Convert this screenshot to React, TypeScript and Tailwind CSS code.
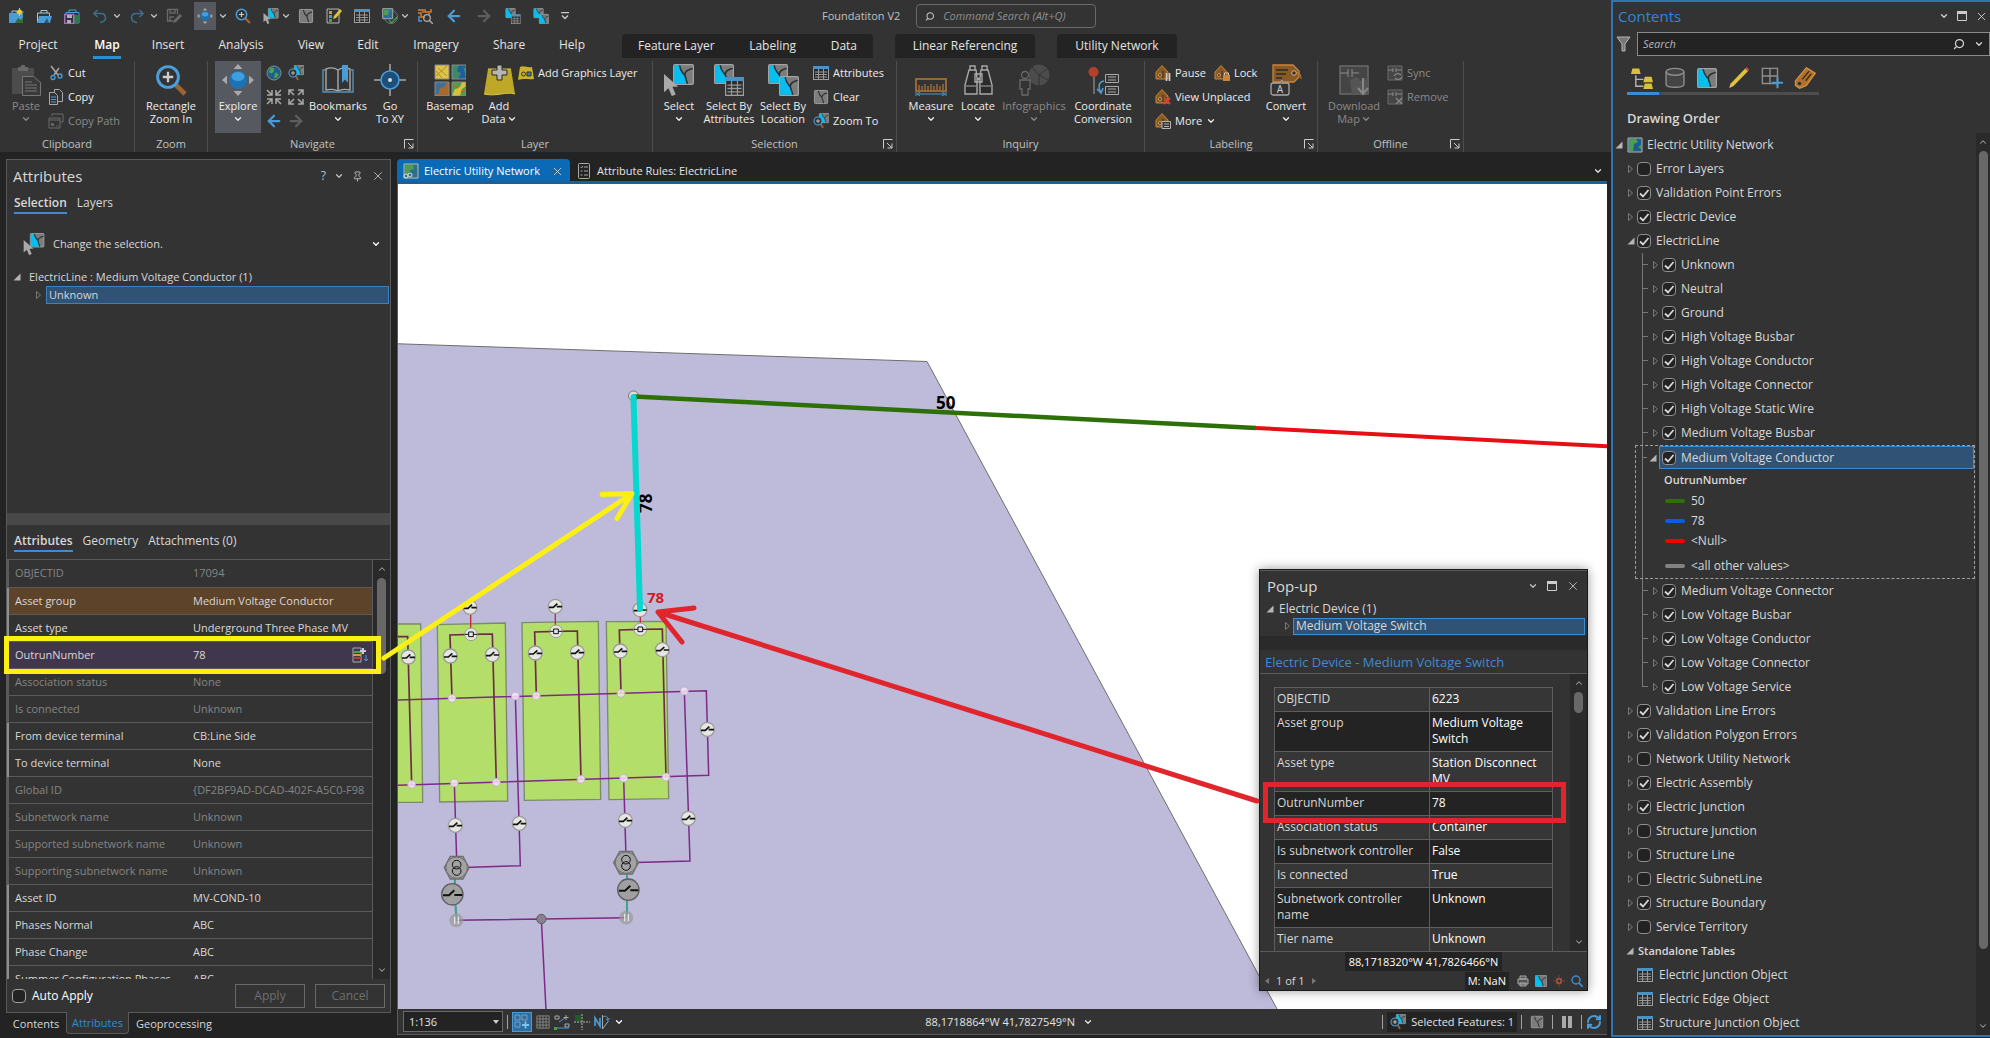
import React from 'react';
import { ArrowLeft, ArrowRight, ChevronDown, ChevronUp, Pin, RefreshCw, Search, X } from 'lucide-react';
import clsx from 'clsx';

/* ---------- icons ---------- */

type IconProps = { size?: number; className?: string };

function Svg({ size = 16, box = 16, className, children }: IconProps & { box?: number; children: React.ReactNode }) {
  return (
    <svg width={size} height={size} viewBox={`0 0 ${box} ${box}`} fill="none" className={clsx('shrink-0', className)} aria-hidden="true">
      {children}
    </svg>
  );
}

function Tile({ x = 0, y = 0, s = 16, off = false }: { x?: number; y?: number; s?: number; off?: boolean }) {
  return (
    <g transform={`translate(${x} ${y}) scale(${s / 16})`}>
      <rect x="0.5" y="0.5" width="15" height="15" rx="1" fill="#7c7c7c" stroke="#a3a3a3" />
      {!off && <path d="M1 1h4.500c0 3 1 5 3.500 7l2 7H1z" fill="#06bff0" />}
      <path d="M5 1c.5 4 2 5.500 4 7.500l2 6.500M9 8.500c0-3 2-4 6-5" stroke="#2b2b2b" strokeWidth="1.200" />
    </g>
  );
}

function Lens({ x = 8, y = 7, r = 5, hx = 15, hy = 15, plus = true }) {
  const d = r * 0.7;
  return (
    <g>
      <path d={`M${x + d} ${y + d}L${hx} ${hy}`} stroke="#9a6433" strokeWidth={r * 0.45} />
      <circle cx={x} cy={y} r={r} fill="#333" stroke="#4a9fdb" strokeWidth={r * 0.28} />
      {plus && <path d={`M${x - r / 2} ${y}h${r}M${x} ${y - r / 2}v${r}`} stroke="#ccc" strokeWidth={r * 0.22} />}
    </g>
  );
}

const Cursor = ({ x = 0, y = 0, s = 1 }) => (
  <path transform={`translate(${x} ${y}) scale(${s})`} d="M0 0v14l3.500-3 2.500 6 3-1.200-2.500-6H11z" fill="#a9a9a9" />
);

const TableGlyph = ({ x = 0, y = 0, w = 16, h = 14, dim = false }) => (
  <g transform={`translate(${x} ${y}) scale(${w / 16} ${h / 14})`}>
    <rect x="0.5" y="0.5" width="15" height="13" fill="#2b2b2b" stroke={dim ? '#777' : '#a0a0a0'} />
    <rect x="0" y="0" width="16" height="3" fill={dim ? '#777' : '#4a93c9'} />
    <path d="M2 6h12M2 8.500h12M2 11h12M5.500 3v11M10.500 3v11" stroke="#999" strokeWidth="1" />
  </g>
);

const TagGlyph = ({ x = 0, y = 0, s = 1 }) => (
  <g transform={`translate(${x} ${y}) scale(${s})`}>
    <path d="M1 14V7l6-6.500 6 6.500v7z" fill="#8a5a25" stroke="#c8853a" />
    <circle cx="5" cy="10" r="1.500" fill="#2b2b2b" stroke="#ddb37d" strokeWidth="0.800" />
    <path d="M8 6v7M11 8v5" stroke="#3a2a18" />
  </g>
);

const NewProject = () => (
  <Svg>
    <path d="M1 5h14v10H1z" fill="#4a9bd6" /><path d="M7 15l3-5 3 2 2-3v6z" fill="#2f6f35" />
    <path d="M4 5V3h5" stroke="#9fc8e6" /><circle cx="11.500" cy="4" r="2.500" fill="#e8cf3a" /><path d="M11.500 0v8M7.500 4h8" stroke="#e8cf3a" />
  </Svg>
);
const OpenProject = () => (
  <Svg><path d="M5 5V2.500h6V5M1.500 14V5h12v3" stroke="#9fc8e6" /><path d="M3 8h13l-2 7H1z" fill="#4a9bd6" /><path d="M8 15l3-5 2 5z" fill="#235a86" /></Svg>
);
const SaveProject = () => (
  <Svg><path d="M5 4V2h7v2M2 12V4.500h13V15h-5" stroke="#4a9bd6" /><path d="M10 7h5v8h-5z" fill="#2f7a4a" /><path d="M.7 6.500h9v9h-9z" fill="#333" stroke="#9a76b8" strokeWidth="1.400" /><path d="M3 7h5v3H3zM3 12h4v3H3z" fill="#b8a5c8" /></Svg>
);
const Undo = ({ flip = false }) => (
  <Svg><path transform={flip ? 'translate(16 0) scale(-1 1)' : undefined} d="M5.500 2L2 5.500 5.500 9M2.500 5.500H9c3 0 4.500 2 4.500 4.500S11 14.500 8 14.500" stroke="#3d6d8c" strokeWidth="1.600" /></Svg>
);
const SaveEdits = () => (
  <Svg><path d="M1.500 1.500h10v5M1.500 1.500V13H7M4 1.500V5h5V1.500M4 13V9h4" stroke="#6a6a6a" strokeWidth="1.300" /><path d="M7 15l1-3 6-6 2 2-6 6z" fill="#6a6a6a" /></Svg>
);
const ExploreIcon = ({ size = 32 }: IconProps) => (
  <Svg size={size} box={32}>
    <path d="M16 0l4.500 5h-9zM16 32l4.500-5h-9zM0 16l5-4.500v9zM32 16l-5-4.500v9z" fill="#a9a9a9" />
    <circle cx="16" cy="16" r="9" fill="#1b72b4" /><ellipse cx="16" cy="12.500" rx="6.500" ry="4.500" fill="#3f9ede" />
  </Svg>
);
const ZoomIcon = ({ size = 16 }: IconProps) => <Svg size={size}><Lens x={6.500} y={6.500} r={5.200} /></Svg>;
const SelectIcon = ({ size = 32 }: IconProps) => <Svg size={size} box={32}><Tile x={10} y={0} s={21} /><Cursor x={1} y={10} s={1.300} /></Svg>;
const ClearIcon = ({ size = 16 }: IconProps) => <Svg size={size}><Tile x={1} y={1} s={14} off /></Svg>;
const LayerTile = ({ size = 16 }: IconProps) => <Svg size={size}><Tile /></Svg>;
const EditList = () => (
  <Svg><path d="M1 1h12v14H1z" stroke="#b5b5b5" /><path d="M3 3h3v3H3z" fill="#d09a3a" /><path d="M3 7h3v3H3z" fill="#4a9bd6" /><path d="M3 11h3v3H3z" fill="#4f9d4f" /><path d="M7 11l1-3 6-7 2 2-6 7z" fill="#e0c33a" /></Svg>
);
const TableIcon = ({ size = 16 }: IconProps) => <Svg size={size}><TableGlyph y={1} /></Svg>;
const CheckMap = () => (
  <Svg><circle cx="9" cy="9" r="6.500" stroke="#777" /><path d="M.7.7h10v10h-10z" fill="#2e6fa0" stroke="#a9a9a9" /><path d="M2 2h5l-1 5H2z" fill="#4f9d4f" /><path d="M7 12l2.500 3L15 9" stroke="#3f8f4f" strokeWidth="1.800" /></Svg>
);
const TraceIcon = () => (
  <Svg><path d="M1 2h5v3M1 5h3v4h4M8 1v3h6V1M12 5v2" stroke="#d98236" strokeWidth="1.400" /><path d="M2 8v5h3" stroke="#4a9bd6" strokeWidth="1.400" /><circle cx="10" cy="10" r="3.300" stroke="#a9a9a9" strokeWidth="1.300" /><path d="M12.500 12.500L16 16" stroke="#a9a9a9" strokeWidth="1.500" /></Svg>
);
const TileTable = ({ size = 32 }: IconProps) => <Svg size={size} box={32}><Tile x={1} s={20} /><TableGlyph x={12} y={13} w={19} h={19} /></Svg>;
const TileTile = ({ size = 32 }: IconProps) => <Svg size={size} box={32}><Tile x={1} s={20} /><Tile x={12} y={12} s={20} /></Svg>;

const PasteIcon = () => (
  <Svg size={32} box={32}>
    <path d="M2 4h22v26H2z" fill="#4c4c4c" /><path d="M8 3h10v4H8zM11 1h4v3h-4z" fill="#686868" />
    <path d="M12.500 12.500h11l7 6v13h-18z" fill="#3a3a3a" stroke="#777" /><path d="M15 18h7M15 21h12M15 24h12M15 27h12" stroke="#777" />
  </Svg>
);
const CutIcon = () => (
  <Svg><path d="M3 1l7 9M11 3L6 10" stroke="#a9a9a9" strokeWidth="1.500" /><circle cx="5" cy="12.500" r="2" stroke="#4a9bd6" strokeWidth="1.300" /><circle cx="12" cy="11" r="2" stroke="#4a9bd6" strokeWidth="1.300" /></Svg>
);
const CopyIcon = () => (
  <Svg><path d="M6.500.5h5l3 3v9h-8z" stroke="#a9a9a9" /><path d="M1.500 3.500h5l3 3v9h-8z" fill="#333" stroke="#a9a9a9" /><path d="M3 8h5M3 10.500h5M3 13h5" stroke="#4a9bd6" /></Svg>
);
const CopyPathIcon = () => (
  <Svg><path d="M4 3V1h11v8h-2M1 5h11v10H1zM1 7h11" stroke="#6a6a6a" /><path d="M3 10l1 3 1-3 1 3M8 13h1M10 13h1" stroke="#6a6a6a" /></Svg>
);
const Globe = () => <Svg><circle cx="8" cy="8" r="7" fill="#1c5f8c" stroke="#8a8a8a" /><path d="M4 3c3-1 5 0 4 3S4 9 3 7zM9 8c3-1 4 1 3 3s-3 3-4 1z" fill="#4f9d4f" /></Svg>;
const ZoomTile = () => <Svg><Tile x={6} y={0} s={10} /><Lens x={5} y={8} r={4} hx={10} hy={15} /></Svg>;
const Corners = ({ out = false }) => (
  <Svg>
    <path
      d={out
        ? 'M1 6V1h5M1 1l5 5M10 1h5v5M15 1l-5 5M1 10v5h5M1 15l5-5M10 15h5v-5M15 15l-5-5'
        : 'M1 6h5V1M1 1l5 5M15 6h-5V1M15 1l-5 5M1 10h5v5M1 15l5-5M15 10h-5v5M15 15l-5-5'}
      stroke="#a9a9a9" strokeWidth="1.500"
    />
  </Svg>
);
const BookIcon = () => (
  <Svg size={32} box={32}>
    <path d="M4 5c5-2 9-1 12 1 3-2 7-3 12-1v21c-5-1-9-1-12 1-3-2-7-2-12-1zM16 6v21" stroke="#a9a9a9" strokeWidth="1.400" />
    <path d="M3 6H1v22h30V6h-2" stroke="#5b8fb5" strokeWidth="1.400" /><path d="M20 1h6v18l-3-3.500L20 19z" fill="#4a9bd6" />
  </Svg>
);
const GoToIcon = () => (
  <Svg size={32} box={32}><path d="M16 0v7M16 25v7M0 16h7M25 16h7" stroke="#a9a9a9" strokeWidth="1.500" /><circle cx="16" cy="16" r="9" fill="#1c4f7c" stroke="#4a9bd6" strokeWidth="1.600" /><circle cx="16" cy="16" r="2" fill="#ddd" /></Svg>
);
const BasemapIcon = () => (
  <Svg size={32} box={32}>
    <path d="M1 1h14v14H1z" fill="#dcc64a" /><path d="M2 12L13 2M4 4l9 8M2 7l6 7" stroke="#b58a2a" />
    <path d="M18 1h14v14H18z" fill="#1c5f9c" /><path d="M18 1h7l-2 6 4 2-3 6h-6zM29 3l3 2v6z" fill="#3d8a6a" />
    <path d="M1 18h14v14H1z" fill="#a8692f" /><path d="M1 18h12l-3 5-4 1-1 5-4 2z" fill="#3d6f9a" />
    <path d="M18 18h14v14H18z" fill="#4f9d4f" /><path d="M18 32l3-7 5-2 2-5h4v4l-4 3-2 7z" fill="#d8c03a" /><path d="M20 22l4 2M27 28l4-2" stroke="#c8602f" strokeWidth="1.500" />
    <path d="M1 1h14v14H1zM18 1h14v14H18zM1 18h14v14H1zM18 18h14v14H18z" stroke="#8a8a8a" />
  </Svg>
);
const AddDataIcon = () => (
  <Svg size={32} box={32}><path d="M5 5h23l4 25c-9-3-18 3-31 0z" fill="#bfa827" /><path d="M5 5h23M1 30c13 3 22-3 31 0" stroke="#dcc64a" /><path d="M14 1h5v5h5v5h-5v5h-5v-5H9V6h5z" fill="#b5b5b5" stroke="#2b2b2b" /></Svg>
);
const GraphicsLayerIcon = () => (
  <Svg><path d="M2 2c4-2 7 1 12 0l2 12c-5 1-9-1-16 1z" fill="#c9b12c" /><circle cx="5.500" cy="9" r="2" stroke="#333" /><path d="M9 7h4v4H9z" stroke="#333" fill="#4a7d8c" /></Svg>
);

const MeasureIcon = () => (
  <Svg size={32} box={32}><path d="M1 15h30v12H1z" stroke="#b87a35" strokeWidth="1.500" /><path d="M4 26v-5M7 26v-4M10 26v-6M13 26v-4M16 26v-6M19 26v-4M22 26v-6M25 26v-4M28 26v-6" stroke="#b87a35" strokeWidth="1.200" /><path d="M1 28v4M31 28v4M3 30h26M5 28l-3 2 3 2M27 28l3 2-3 2" stroke="#4a9bd6" /></Svg>
);
const LocateIcon = () => (
  <Svg size={32} box={32}>
    <path d="M8 2h5v4H8zM20 2h5v4h-5zM7 6h7l1 8v16H3V21zM19 6h7l4 15v9H18V14zM13 10h7v8h-7z" fill="#2b2b2b" stroke="#a9a9a9" strokeWidth="1.400" /><path d="M4 22h10M19 22h10" stroke="#a9a9a9" /><circle cx="16.500" cy="15" r="1.500" fill="#a9a9a9" />
  </Svg>
);
const InfoIcon = () => (
  <Svg size={32} box={32}><circle cx="21" cy="11" r="10.500" fill="#4c4c4c" /><path d="M21 11L14 3M21 11V22M21 11l9 5M21 11l8-6" stroke="#333" /><circle cx="7" cy="11" r="3.500" fill="#333" stroke="#6a6a6a" strokeWidth="1.300" /><path d="M2 16h10v9h-2v6H4v-6H2z" fill="#333" stroke="#6a6a6a" strokeWidth="1.300" /></Svg>
);
const CoordIcon = () => (
  <Svg size={32} box={32}><path d="M7 12v18" stroke="#a9a9a9" /><circle cx="6.500" cy="8" r="5" fill="#b5402a" /><path d="M17 17c-6 1-6 7-3 12M10 25l4 4 2-5" stroke="#4a9bd6" strokeWidth="1.600" /><path d="M18.500 10.500h13v8h-13zM18.500 22.500h13v8h-13zM21 13h8M21 16h8M21 25h8M21 28h8" stroke="#a9a9a9" /></Svg>
);
const TagPause = () => <Svg><TagGlyph /><path d="M11.500 8v8M14.500 8v8" stroke="#ccc" strokeWidth="1.700" /></Svg>;
const TagLock = () => <Svg><TagGlyph /><path d="M9 10h7v6H9z" fill="#c8853a" /><path d="M10.500 10V8h4v2" stroke="#ccc" /></Svg>;
const TagX = () => <Svg><TagGlyph /><path d="M9 9l6 6M15 9l-6 6" stroke="#d9432f" strokeWidth="2" /></Svg>;
const TagList = () => <Svg><TagGlyph /><path d="M7 8.500h8.500v7H7z" fill="#333" stroke="#b5b5b5" /><path d="M9 11h5M9 13.500h5" stroke="#b5b5b5" /></Svg>;
const ConvertIcon = () => (
  <Svg size={32} box={32}>
    <path d="M3 1h20l6 6v6l-5 5H3z" fill="#8a5a25" stroke="#c8853a" strokeWidth="1.300" /><path d="M6 6h12M6 10h10M6 14h6" stroke="#2b2b2b" strokeWidth="1.300" />
    <circle cx="24" cy="9" r="2.300" fill="#333" stroke="#ddb37d" /><path d="M27 9c3 0 4 2 4 6" stroke="#c8853a" />
    <rect x="1" y="19" width="18" height="12" rx="2" fill="#333" stroke="#a9a9a9" strokeWidth="1.300" /><path d="M10 19l2-3v3" fill="#333" stroke="#a9a9a9" />
    <text x="10" y="29" textAnchor="middle" fontSize="10" fill="#ccc" fontFamily="Noto Sans, sans-serif">A</text>
  </Svg>
);
const DownloadMapIcon = () => (
  <Svg size={32} box={32}><path d="M2 2h28v28H2z" fill="#454545" stroke="#6a6a6a" strokeWidth="1.500" /><path d="M2 9h8M14 9h7M10 5v8M14 5v8" stroke="#777" strokeWidth="1.500" /><path d="M12 16l6-3 6 4 6-4v17H14z" fill="#555" /><path d="M25 14v15M20 24l5 6 5-6" stroke="#888" strokeWidth="2" /></Svg>
);
const SyncIcon = ({ cross = false }) => (
  <Svg><path d="M1 1h14v14H1z" fill="#454545" stroke="#6a6a6a" /><path d="M1 5h5M9 5h6M6 3v4M9 3v4" stroke="#888" /><path d={cross ? 'M9 9l6 6M15 9l-6 6' : 'M7 11c2-3 5-3 7-1M15 12c-2 3-5 3-7 1'} stroke="#888" strokeWidth="1.300" /></Svg>
);
const Launcher = () => <Svg size={10} box={10}><path d="M.5 9.500v-9h9M4 4l5 5M9 4.500V9H4.500" stroke="#ccc" /></Svg>;

const Caret = ({ className }: { className?: string }) => <ChevronDown size={10} strokeWidth={3} className={clsx('shrink-0', className)} aria-hidden="true" />;
const Expander = ({ open = false, className }: { open?: boolean; className?: string }) => (
  <Svg size={8} box={8} className={className}>
    {open ? <path d="M7.500 0.500v7h-7z" fill="#b5b5b5" /> : <path d="M1.500 0.500v7l4-3.500z" stroke="#7a7a7a" />}
  </Svg>
);
const MaxBox = () => <Svg size={10} box={10}><path d="M.5.5h9v9h-9z" stroke="#ccc" /><path d="M0 0h10v3H0z" fill="#ccc" /></Svg>;

/* ---------- ribbon ---------- */

function Big({ icon, lines, caret, inlineCaret, dim, active, className }: {
  icon: React.ReactNode; lines: string[]; caret?: boolean; inlineCaret?: boolean; dim?: boolean; active?: boolean; className?: string;
}) {
  return (
    <button type="button" className={clsx('flex h-[72px] shrink-0 flex-col items-center pt-[3px] whitespace-nowrap', dim ? 'text-[#8a8a8a]' : 'text-[#ededed]', active && 'bg-[#565960]', className)}>
      {icon}
      <span className="mt-[3px] leading-[13px]">{lines[0]}</span>
      {lines[1] && (
        <span className="flex items-center leading-[13px]">
          {lines[1]}
          {inlineCaret && <Caret className="ml-px" />}
        </span>
      )}
      {caret && <Caret className="mt-[2px]" />}
    </button>
  );
}

function Small({ icon, text, dim, caret }: { icon: React.ReactNode; text: string; dim?: boolean; caret?: boolean }) {
  return (
    <button type="button" className={clsx('flex h-6 items-center gap-[4px] whitespace-nowrap', dim ? 'text-[#8a8a8a]' : 'text-[#ededed]')}>
      {icon}
      {text}
      {caret && <Caret />}
    </button>
  );
}

function Group({ title, launcher, className, children }: { title: string; launcher?: boolean; className?: string; children: React.ReactNode }) {
  return (
    <section aria-label={title} className={clsx('flex shrink-0 flex-col border-r border-[#4d4d4d]', className)}>
      <div className="flex h-[76px] items-start">{children}</div>
      <div className="grid h-[14px] grid-cols-[16px_1fr_16px] items-center text-center text-[#c0c0c0]">
        <span />
        <span className="leading-[14px]">{title}</span>
        {launcher && <button type="button" aria-label={`${title} options`} className="justify-self-center"><Launcher /></button>}
      </div>
    </section>
  );
}

const tabs = ['Project', 'Map', 'Insert', 'Analysis', 'View', 'Edit', 'Imagery', 'Share', 'Help'];
const tabWidths = ['w-[76px]', 'w-[62px]', 'w-[60px]', 'w-[86px]', 'w-[54px]', 'w-[60px]', 'w-[76px]', 'w-[70px]', 'w-[56px]'];

function QuickAccess() {
  return (
    <div className="flex h-full w-[590px] shrink-0 items-center gap-3 pl-2 text-[#c0c0c0]">
      <button type="button" aria-label="New project"><NewProject /></button>
      <button type="button" aria-label="Open project"><OpenProject /></button>
      <button type="button" aria-label="Save project"><SaveProject /></button>
      <button type="button" aria-label="Undo" className="-mr-[5px] flex items-center gap-1"><Undo /><Caret /></button>
      <button type="button" aria-label="Redo" className="-mr-[5px] flex items-center gap-1"><Undo flip /><Caret /></button>
      <button type="button" aria-label="Save edits"><SaveEdits /></button>
      <div className="-mr-[5px] flex items-center gap-[2px]">
        <button type="button" aria-label="Explore tool" className="flex h-7 w-[22px] items-center justify-center bg-[#565960]"><ExploreIcon size={16} /></button>
        <Caret />
      </div>
      <button type="button" aria-label="Zoom in"><ZoomIcon /></button>
      <button type="button" aria-label="Select tool" className="-mr-[5px] flex items-center gap-[2px]"><SelectIcon size={16} /><Caret /></button>
      <button type="button" aria-label="Clear selection"><ClearIcon /></button>
      <button type="button" aria-label="Edit attributes"><EditList /></button>
      <button type="button" aria-label="Open table"><TableIcon /></button>
      <button type="button" aria-label="Validate" className="-mr-[5px] flex items-center gap-[2px]"><CheckMap /><Caret /></button>
      <button type="button" aria-label="Trace"><TraceIcon /></button>
      <button type="button" aria-label="Previous extent"><ArrowLeft size={18} strokeWidth={3} className="text-[#4a9bd6]" /></button>
      <button type="button" aria-label="Next extent"><ArrowRight size={18} strokeWidth={3} className="text-[#5e5e5e]" /></button>
      <button type="button" aria-label="Select by attributes"><TileTable size={16} /></button>
      <button type="button" aria-label="Select by location"><TileTile size={16} /></button>
      <button type="button" aria-label="Customize toolbar"><Svg size={8} box={8}><path d="M0 .7h8M1 3.500l3 3 3-3" stroke="#ccc" strokeWidth="1.300" /></Svg></button>
    </div>
  );
}

function Ribbon() {
  return (
    <header className="bg-[#333333]">
      <div className="flex h-8 items-center">
        <QuickAccess />
        <div className="flex flex-1 items-center justify-start gap-4 pl-[232px] text-[#c0c0c0]">
          <span className="whitespace-nowrap">Foundatiton V2</span>
          <label className="flex h-6 w-[180px] items-center gap-2 rounded-sm border border-[#6a6a6a] px-2">
            <Search size={11} strokeWidth={2.500} className="-scale-x-100" aria-hidden="true" />
            <input aria-label="Command Search" placeholder="Command Search (Alt+Q)" className="w-full min-w-0 bg-transparent italic outline-none placeholder:text-[#8f8f8f]" />
          </label>
        </div>
      </div>
      <nav className="flex h-7 items-center text-[12px] text-[#e3e3e3]">
        {tabs.map((t, i) => (
          <a key={t} href="#" className={clsx('flex h-[26px] shrink-0 items-center justify-center', tabWidths[i])}>
            <span className={clsx('flex h-[26px] items-center border-b-[3px]', t === 'Map' ? 'border-[#2b8fd0] px-px font-semibold text-white' : 'border-transparent')}>{t}</span>
          </a>
        ))}
        <div className="ml-[22px] flex h-6 w-[251px] shrink-0 items-center justify-between rounded-t bg-[#232323] px-[16px] whitespace-nowrap">
          <a href="#">Feature Layer</a>
          <a href="#">Labeling</a>
          <a href="#">Data</a>
        </div>
        <div className="ml-[22px] flex h-6 w-[140px] shrink-0 items-center justify-center rounded-t bg-[#232323] whitespace-nowrap"><a href="#">Linear Referencing</a></div>
        <div className="ml-[22px] flex h-6 w-[120px] shrink-0 items-center justify-center rounded-t bg-[#232323] whitespace-nowrap"><a href="#">Utility Network</a></div>
      </nav>
      <div className="flex h-[92px] overflow-hidden pt-px text-[#c0c0c0]">
        <Group title="Clipboard" className="w-[135px]">
          <Big icon={<PasteIcon />} lines={['Paste']} caret dim className="w-[48px] pl-1" />
          <div><Small icon={<CutIcon />} text="Cut" /><Small icon={<CopyIcon />} text="Copy" /><Small icon={<CopyPathIcon />} text="Copy Path" dim /></div>
        </Group>
        <Group title="Zoom" className="w-[73px]">
          <Big icon={<ZoomIcon size={32} />} lines={['Rectangle', 'Zoom In']} className="w-[72px]" />
        </Group>
        <Group title="Navigate" launcher className="w-[210px]">
          <Big icon={<ExploreIcon />} lines={['Explore']} caret active className="ml-[7px] w-[46px]" />
          <div className="grid w-[46px] grid-cols-2 justify-items-center pl-[2px] text-[#5e5e5e] *:flex *:h-6 *:items-center">
            <button type="button" aria-label="Full extent"><Globe /></button>
            <button type="button" aria-label="Zoom to selection"><ZoomTile /></button>
            <button type="button" aria-label="Fixed zoom in"><Corners /></button>
            <button type="button" aria-label="Fixed zoom out"><Corners out /></button>
            <button type="button" aria-label="Back"><ArrowLeft size={18} strokeWidth={3} className="text-[#4a9bd6]" /></button>
            <button type="button" aria-label="Forward"><ArrowRight size={18} strokeWidth={3} /></button>
          </div>
          <Big icon={<BookIcon />} lines={['Bookmarks']} caret className="w-[62px]" />
          <Big icon={<GoToIcon />} lines={['Go', 'To XY']} className="w-[42px]" />
        </Group>
        <Group title="Layer" className="w-[235px]">
          <Big icon={<BasemapIcon />} lines={['Basemap']} caret className="w-[64px]" />
          <Big icon={<AddDataIcon />} lines={['Add', 'Data']} inlineCaret className="mr-[2px] w-[34px]" />
          <Small icon={<GraphicsLayerIcon />} text="Add Graphics Layer" />
        </Group>
        <Group title="Selection" launcher className="w-[244px]">
          <Big icon={<SelectIcon />} lines={['Select']} caret className="w-[52px]" />
          <Big icon={<TileTable />} lines={['Select By', 'Attributes']} className="w-[48px]" />
          <Big icon={<TileTile />} lines={['Select By', 'Location']} className="w-[60px]" />
          <div><Small icon={<TableIcon />} text="Attributes" /><Small icon={<ClearIcon />} text="Clear" /><Small icon={<ZoomTile />} text="Zoom To" /></div>
        </Group>
        <Group title="Inquiry" className="w-[248px]">
          <Big icon={<MeasureIcon />} lines={['Measure']} caret className="ml-2 w-[52px]" />
          <Big icon={<LocateIcon />} lines={['Locate']} caret className="w-[42px]" />
          <Big icon={<InfoIcon />} lines={['Infographics']} caret dim className="w-[70px]" />
          <Big icon={<CoordIcon />} lines={['Coordinate', 'Conversion']} className="w-[68px]" />
        </Group>
        <Group title="Labeling" launcher className="w-[173px]">
          <div className="w-[106px] shrink-0 pl-[10px]">
            <div className="flex gap-2"><Small icon={<TagPause />} text="Pause" /><Small icon={<TagLock />} text="Lock" /></div>
            <Small icon={<TagX />} text="View Unplaced" />
            <Small icon={<TagList />} text="More" caret />
          </div>
          <Big icon={<ConvertIcon />} lines={['Convert']} caret className="ml-[10px] w-[50px]" />
        </Group>
        <Group title="Offline" launcher className="w-[146px]">
          <Big icon={<DownloadMapIcon />} lines={['Download', 'Map']} inlineCaret dim className="ml-[3px] w-[66px]" />
          <div><Small icon={<SyncIcon />} text="Sync" dim /><Small icon={<SyncIcon cross />} text="Remove" dim /></div>
        </Group>
      </div>
    </header>
  );
}

/* ---------- attributes pane ---------- */

const attributes: { name: string; value: string; tone?: 'dim' | 'brown' | 'violet' }[] = [
  { name: 'OBJECTID', value: '17094', tone: 'dim' },
  { name: 'Asset group', value: 'Medium Voltage Conductor', tone: 'brown' },
  { name: 'Asset type', value: 'Underground Three Phase MV' },
  { name: 'OutrunNumber', value: '78', tone: 'violet' },
  { name: 'Association status', value: 'None', tone: 'dim' },
  { name: 'Is connected', value: 'Unknown', tone: 'dim' },
  { name: 'From device terminal', value: 'CB:Line Side' },
  { name: 'To device terminal', value: 'None' },
  { name: 'Global ID', value: '{DF2BF9AD-DCAD-402F-A5C0-F98', tone: 'dim' },
  { name: 'Subnetwork name', value: 'Unknown', tone: 'dim' },
  { name: 'Supported subnetwork name', value: 'Unknown', tone: 'dim' },
  { name: 'Supporting subnetwork name', value: 'Unknown', tone: 'dim' },
  { name: 'Asset ID', value: 'MV-COND-10' },
  { name: 'Phases Normal', value: 'ABC' },
  { name: 'Phase Change', value: 'ABC' },
  { name: 'Summer Configuration Phases', value: 'ABC' },
];

function Scroller({ thumb, className }: { thumb: string; className?: string }) {
  return (
    <div className={clsx('flex shrink-0 flex-col items-center justify-between bg-[#2a2a2a] py-1 text-[#a0a0a0]', className)}>
      <ChevronUp size={10} strokeWidth={2.500} />
      <div className="flex w-full flex-1 justify-center py-1"><div className={clsx('w-[9px] rounded-full bg-[#686868]', thumb)} /></div>
      <ChevronDown size={10} strokeWidth={2.500} />
    </div>
  );
}

function AttributesPane() {
  return (
    <aside className="flex w-[391px] shrink-0 flex-col pl-[6px] text-[#d8d8d8]">
      <div className="mt-[7px] flex min-h-0 flex-1 flex-col border border-[#5a5a5a] bg-[#333333]">
        <div className="flex h-[32px] shrink-0 items-center justify-between pr-[5px] pl-[6px]">
          <h2 className="text-[15px]">Attributes</h2>
          <div className="flex items-center gap-[8px] text-[#c0c0c0]">
            <button type="button" aria-label="Help" className="text-[12px]">?</button>
            <button type="button" aria-label="Pane options"><Caret /></button>
            <button type="button" aria-label="Pin"><Pin size={11} /></button>
            <button type="button" aria-label="Close"><X size={14} strokeWidth={1.500} /></button>
          </div>
        </div>
        <div className="mt-[2px] flex h-[20px] shrink-0 gap-[10px] px-[7px] text-[12px]">
          <button type="button" className="border-b-2 border-[#3d8bd0] font-semibold">Selection</button>
          <button type="button" className="border-b-2 border-transparent">Layers</button>
        </div>
        <button type="button" className="mt-[13px] flex h-[34px] shrink-0 items-center gap-2 pr-[9px] pl-[16px]">
          <SelectIcon size={22} />
          <span className="flex-1 text-left">Change the selection.</span>
          <Caret className="text-white" />
        </button>
        <div className="mt-[7px] flex h-[18px] shrink-0 items-center gap-2 pl-[6px]"><Expander open />ElectricLine : Medium Voltage Conductor (1)</div>
        <div className="flex h-[18px] shrink-0 items-center pr-px pl-[28px]">
          <Expander />
          <div className="ml-[3px] flex h-[18px] flex-1 items-center border border-[#3d7fbf] bg-[#2f5275] px-[2px]">Unknown</div>
        </div>
        <div className="min-h-0 flex-1" />
        <div className="h-3 shrink-0 bg-[#484848]" />
        <div className="mt-[7px] flex h-[20px] shrink-0 gap-[10px] px-[7px] text-[12px]">
          <button type="button" className="border-b-2 border-[#3d8bd0] font-semibold">Attributes</button>
          <button type="button" className="border-b-2 border-transparent">Geometry</button>
          <button type="button" className="border-b-2 border-transparent">Attachments (0)</button>
        </div>
        <div className="mt-[7px] flex h-[420px] shrink-0 overflow-hidden border-t border-[#5a5a5a]">
          <div className="min-w-0 flex-1 overflow-hidden">
            <table className="w-full table-fixed border-collapse">
              <colgroup><col className="w-[180px]" /><col /></colgroup>
              <tbody>
                {attributes.map((a) => (
                  <tr key={a.name} className={clsx('h-[27px] border-b border-l-2 border-b-[#5a5a5a]', a.tone === 'dim' ? 'border-l-[#5a5a5a] text-[#858585]' : 'border-l-[#8f8f8f] text-[#d8d8d8]', a.tone === 'brown' && 'bg-[#5c432a]', a.tone === 'violet' && 'bg-[#40364e]')}>
                    <th scope="row" className="pl-[6px] text-left font-normal whitespace-nowrap">{a.name}</th>
                    <td className="pr-[4px] whitespace-nowrap">
                      <div className="flex items-center justify-between">
                        <span className="pl-[5px]">{a.value}</span>
                        {a.tone === 'violet' && (
                          <Svg size={16}><path d="M1 1h8v14H1z" stroke="#a9a9a9" /><path d="M1 5h8" stroke="#4f9d4f" strokeWidth="2" /><path d="M1 8h8" stroke="#d09a3a" strokeWidth="2" /><path d="M1 11h8" stroke="#b5402a" strokeWidth="2" /><path d="M8 4h6M11 1v6" stroke="#ccc" strokeWidth="2" /><path d="M14 8v6M12 12l2 2 2-2" stroke="#4a9bd6" /></Svg>
                        )}
                      </div>
                    </td>
                  </tr>
                ))}
              </tbody>
            </table>
          </div>
          <Scroller thumb="h-[96px]" className="w-[18px] border-l border-[#5a5a5a]" />
        </div>
        <div className="flex h-[33px] shrink-0 items-center pr-[5px] pl-[5px] text-[12px]">
          <label className="flex flex-1 items-center gap-[6px] text-white">
            <input type="checkbox" className="h-[14px] w-[14px] appearance-none rounded-sm border border-[#a0a0a0] bg-[#232323]" />
            Auto Apply
          </label>
          <button type="button" className="h-6 w-[70px] border border-[#6a6a6a] text-[#6e6e6e]">Apply</button>
          <button type="button" className="ml-[10px] h-6 w-[70px] border border-[#6a6a6a] text-[#6e6e6e]">Cancel</button>
        </div>
      </div>
      <div className="flex h-[25px] shrink-0 items-start">
        <button type="button" className="h-[21px] w-[60px]">Contents</button>
        <button type="button" className="-mt-px h-[22px] w-[63px] rounded-b border border-t-0 border-[#5a5a5a] bg-[#333333] text-[#2b8fd0]">Attributes</button>
        <button type="button" className="h-[21px] px-[7px]">Geoprocessing</button>
      </div>
    </aside>
  );
}

/* ---------- map ---------- */

const switches = [[219, 142], [475, 139], [729, 149], [34, 291], [160, 288], [286, 284], [415, 279], [541, 277], [670, 273], [796, 269], [931, 508], [175, 796], [367, 790], [685, 781], [874, 775]];
const fuses = [[222, 223], [477, 214], [730, 208]];
const junctions = [[165, 415], [355, 408], [418, 407], [672, 400], [862, 393], [44, 673], [172, 669], [298, 667], [552, 658], [680, 655], [807, 651]];

function MapDrawing() {
  return (
    <svg className="block h-full w-full bg-white" role="img" aria-label="Map">
      <g transform="translate(-398 -184)">
        <path d="M390 343.500L927 361.500 1277 1009v20H390z" fill="#bebada" stroke="#6e6e6e" />
        <circle cx="633.500" cy="396" r="5" fill="#ddd" stroke="#777" />
        <path d="M634 396.500L1256 428" stroke="#2d7007" strokeWidth="4.500" />
        <path d="M1256 428L1612 446.500" stroke="#e60f14" strokeWidth="4" />
        <text x="936" y="409" fontSize="17" fontWeight="700" fontFamily="Noto Sans, sans-serif">50</text>
        <text transform="translate(652 513) rotate(-90)" fontSize="17" fontWeight="700" fontFamily="Noto Sans, sans-serif">78</text>
        <g transform="translate(397 560) scale(.33333)">
          <path d="M-3 192H71L77 727H-3zM121 194L325 189 332 723 128 726zM375 188L604 184 611 718 382 721zM628 185L807 184 815 716 636 719z" fill="#b3de69" stroke="#7c8b6c" strokeWidth="4" />
          <g stroke="#7c2a85" strokeWidth="4.500" fill="none">
            <path d="M0 420L928 392 931 500 935 646 0 676" />
            <path d="M355 408L370 917 179 923M862 393L879 903 687 908M172 669L179 900M680 655L687 890M178 1081L688 1073M433 1077L447 1350" />
          </g>
          <g stroke="#6f2b45" strokeWidth="5" fill="none">
            <path d="M0 230H32L44 673M222 223L159 225 165 415M222 223L286 222 298 667M477 214L413 216 418 407M477 214L541 213 552 658M730 208L667 210 672 400M730 208L796 207 807 651" />
          </g>
          <path d="M221 150V215M475 150V205M730 160V200" stroke="#c22a3a" strokeWidth="4" />
          <path d="M174 950L172 1000 179 1080M690 930V1070" stroke="#3aa589" strokeWidth="6" />
          {junctions.map(([x, y]) => <circle key={`${x}-${y}`} cx={x} cy={y} r="12" fill="#f3e6f5" fillOpacity=".85" stroke="#b9a0c4" strokeWidth="2" />)}
          {fuses.map(([x, y]) => (
            <g key={`${x}-${y}`} transform={`translate(${x} ${y})`}><circle r="19" fill="#e6e6e2" stroke="#9a9a9a" strokeWidth="3" /><path d="M-19 0h12M7 0h12M-7-7H7V7H-7z" stroke="#111" strokeWidth="3" fill="none" /></g>
          ))}
          {switches.map(([x, y]) => (
            <g key={`${x}-${y}`} transform={`translate(${x} ${y})`}><circle r="21" fill="#e6e6e2" stroke="#9a9a9a" strokeWidth="4" /><path d="M-19 3h13L6-8M4 1h16" stroke="#111" strokeWidth="5" fill="none" /></g>
          ))}
          {[[179, 923], [687, 908]].map(([x, y]) => (
            <g key={x} transform={`translate(${x} ${y})`}><path d="M-37 0L-19-34H19L37 0 19 34H-19z" fill="#9a9a9a" stroke="#6e6e6e" strokeWidth="4" /><circle r="32" fill="#a3a3a3" stroke="#6e6e6e" strokeWidth="3" /><circle cy="-9" r="13" stroke="#111" strokeWidth="3" fill="none" /><circle cy="10" r="13" stroke="#111" strokeWidth="3" fill="none" /></g>
          ))}
          {[[166, 1003], [694, 989]].map(([x, y]) => (
            <g key={x} transform={`translate(${x} ${y})`}><circle r="32" fill="#a0a0a0" stroke="#5e5e5e" strokeWidth="4" /><path d="M-28 3h18L6-12M6 2h24" stroke="#111" strokeWidth="6" fill="none" /></g>
          ))}
          {[[178, 1081], [688, 1073]].map(([x, y]) => (
            <g key={x} transform={`translate(${x} ${y})`}><circle r="21" fill="#9a9a9a" fillOpacity=".7" /><path d="M-5-11V11M6-11V11" stroke="#e3e3e3" strokeWidth="4" /></g>
          ))}
          <circle cx="433" cy="1077" r="14" fill="#8a8292" stroke="#5a5a5a" strokeWidth="3" />
        </g>
        <path d="M633.500 397L640 609" stroke="#06d8d0" strokeWidth="6" strokeLinecap="round" />
        <text x="647" y="603" fontSize="15" fontWeight="700" fill="#d8161f" fontFamily="Noto Sans, sans-serif">78</text>
      </g>
    </svg>
  );
}

const popupRows = [
  ['OBJECTID', '6223'],
  ['Asset group', 'Medium Voltage Switch'],
  ['Asset type', 'Station Disconnect MV'],
  ['OutrunNumber', '78'],
  ['Association status', 'Container'],
  ['Is subnetwork controller', 'False'],
  ['Is connected', 'True'],
  ['Subnetwork controller name', 'Unknown'],
  ['Tier name', 'Unknown'],
];

function Popup() {
  return (
    <div role="dialog" aria-label="Pop-up" className="absolute top-[385px] left-[861px] flex h-[422px] w-[329px] flex-col border border-[#1a1a1a] bg-[#333333] text-[#d8d8d8] shadow-[0_0_10px_rgba(0,0,0,0.4)]">
      <div className="flex h-[31px] shrink-0 items-center justify-between border-t border-[#5a5a5a] pr-[7px] pl-[7px]">
        <h2 className="text-[15px]">Pop-up</h2>
        <div className="flex items-center gap-[9px] text-[#c0c0c0]">
          <button type="button" aria-label="Options"><Caret /></button>
          <button type="button" aria-label="Maximize"><MaxBox /></button>
          <button type="button" aria-label="Close"><X size={14} strokeWidth={1.500} /></button>
        </div>
      </div>
      <div className="flex h-[15px] shrink-0 items-center gap-[5px] pl-[6px] text-[12px]"><Expander open />Electric Device (1)</div>
      <div className="flex h-[20px] shrink-0 items-center pr-[2px] pl-[24px] text-[12px]">
        <Expander />
        <div className="ml-px flex h-[17px] flex-1 items-center border border-[#3d8bd0] bg-[#2f5275] px-[2px]">Medium Voltage Switch</div>
      </div>
      <div className="h-[14px] shrink-0 bg-[#2a2a2a]" />
      <h3 className="flex h-[24px] shrink-0 items-center border-b border-[#5a5a5a] pl-[5px] text-[13px] text-[#3d8bd0]">Electric Device - Medium Voltage Switch</h3>
      <div className="flex min-h-0 flex-1 overflow-hidden">
        <div className="flex-1 overflow-hidden pt-[13px] pr-[17px] pl-[14px]">
          <table className="w-full table-fixed border-collapse text-[12px] leading-[16px]">
            <colgroup><col className="w-[155px]" /><col /></colgroup>
            <tbody>
              {popupRows.map(([k, v], i) => (
                <tr key={k} className={clsx('align-top', i % 2 === 0 ? 'bg-[#363636]' : 'bg-[#232323]')}>
                  <th scope="row" className="border border-[#5e5e5e] px-[2px] pt-[3px] pb-[4px] text-left font-normal">{k}</th>
                  <td className="border border-[#5e5e5e] px-[2px] pt-[3px] pb-[4px] text-white">{v}</td>
                </tr>
              ))}
            </tbody>
          </table>
        </div>
        <Scroller thumb="h-[21px]" className="w-[17px]" />
      </div>
      <div className="flex h-[39px] shrink-0 flex-col border-t border-[#5a5a5a] text-white">
        <div className="flex h-[19px] justify-center"><span className="flex items-center bg-[#232323] px-1">88,1718320°W 41,7826466°N</span></div>
        <div className="flex h-[19px] items-center pr-[4px] pl-[4px]">
          <span className="flex flex-1 items-center gap-[6px] text-[#d8d8d8]">
            <Svg size={6} box={6}><path d="M5 0v6L1 3z" fill="#777" /></Svg>1 of 1<Svg size={6} box={6}><path d="M1 0v6l4-3z" fill="#777" /></Svg>
          </span>
          <span className="mr-2 flex h-[18px] items-center bg-[#232323] px-[3px]">M: NaN</span>
          <span className="flex gap-[6px]">
            <button type="button" aria-label="Print"><Svg size={12} box={12}><path d="M3 1h6v3H3zM1 4h10v5H1zM3 8h6v3H3z" fill="#555" stroke="#a9a9a9" /></Svg></button>
            <button type="button" aria-label="Select feature"><LayerTile size={12} /></button>
            <button type="button" aria-label="Flash"><Svg size={12} box={12}><path d="M6 0v12M0 6h12M2.500 2.500l7 7M9.500 2.500l-7 7" stroke="#a5402a" strokeWidth=".8" /><path d="M4 4h4v4H4z" fill="#333" stroke="#c86a4a" /></Svg></button>
            <button type="button" aria-label="Zoom to"><Svg size={12} box={12}><circle cx="5" cy="5" r="4" stroke="#3d8bd0" strokeWidth="1.500" /><path d="M8 8l4 4" stroke="#3d8bd0" strokeWidth="1.800" /></Svg></button>
          </span>
        </div>
      </div>
    </div>
  );
}

const Bar = () => <span className="h-[14px] w-px shrink-0 bg-[#a0a0a0]" />;

function StatusBar() {
  return (
    <div className="flex h-[26px] shrink-0 items-center gap-[4px] border-b border-[#5a5a5a] bg-[#333333] px-[5px] text-[#e3e3e3]">
      <label className="grid w-[100px] items-center">
        <select aria-label="Map scale" className="col-start-1 row-start-1 h-[21px] w-full appearance-none border border-[#6a6a6a] bg-[#232323] px-[5px]"><option>1:136</option></select>
        <Svg size={6} box={6} className="pointer-events-none col-start-1 row-start-1 mr-1 justify-self-end"><path d="M0 1h6L3 5z" fill="#ccc" /></Svg>
      </label>
      <Bar />
      <button type="button" aria-label="Snapping" className="flex h-5 w-5 items-center justify-center border border-[#4a9bd6] bg-[#2d6ea3]"><Svg><path d="M1 1h5v5H1zM8 1h5v5H8zM1 8h5v5H1z" stroke="#7f9db5" /><path d="M8 11h7M11.500 7.500v7" stroke="#7cc4f0" strokeWidth="1.800" /></Svg></button>
      <button type="button" aria-label="Grid"><Svg size={14}><path d="M1 1h14v14H1zM1 4.500h14M1 8h14M1 11.500h14M4.500 1v14M8 1v14M11.500 1v14" stroke="#8a8a8a" /></Svg></button>
      <button type="button" aria-label="Constraints"><Svg><path d="M1 2h4v3H1zM11 10h4v3h-4z" stroke="#a9a9a9" /><path d="M1 14h14M5 8l6-4" stroke="#4a9bd6" /><path d="M12 1v5M9.500 3.500h5" stroke="#a9a9a9" /><path d="M0 13h3v3H0z" fill="#4f9d4f" /></Svg></button>
      <button type="button" aria-label="Center guides"><Svg><path d="M1 1h6v6H1z" fill="#1f5a28" /><path d="M8 0v16M0 8h16" stroke="#8a8a8a" strokeWidth="1.500" strokeDasharray="2 1" /></Svg></button>
      <button type="button" aria-label="North orientation"><Svg><path d="M1 12V4l5 8V4" stroke="#4a9bd6" strokeWidth="1.700" /><path d="M8.500 1v14l6-8" stroke="#a9a9a9" /><path d="M9 3c3-2 5 0 5 3M12 5l2 1.500L15.500 4" stroke="#4a9bd6" /></Svg></button>
      <button type="button" aria-label="More tools"><Caret className="text-white" /></button>
      <span className="ml-[4px]"><Bar /></span>
      <div className="flex flex-1 items-center justify-center gap-2 pl-1 whitespace-nowrap">88,1718864°W 41,7827549°N<Caret /></div>
      <Bar />
      <div className="flex h-5 items-center gap-[5px] bg-[#232323] px-[3px] whitespace-nowrap"><ZoomTile />Selected Features: 1</div>
      <Bar />
      <button type="button" aria-label="Clear selected" className="mx-1"><ClearIcon size={14} /></button>
      <Bar />
      <button type="button" aria-label="Pause drawing" className="mx-[4px]"><Svg size={12} box={12}><path d="M3 0v12M9 0v12" stroke="#a9a9a9" strokeWidth="4" /></Svg></button>
      <Bar />
      <button type="button" aria-label="Refresh"><RefreshCw size={16} strokeWidth={3} className="text-[#4a9bd6]" /></button>
    </div>
  );
}

function MapView() {
  return (
    <main className="mr-1 flex min-w-0 flex-1 flex-col pt-[7px]">
      <div className="flex h-[22px] shrink-0 items-center text-[#e3e3e3]">
        <div className="ml-[6px] flex h-[22px] items-center rounded-t bg-[#0a6ab5] pt-[2px] pr-[6px] pl-[6px]">
          <Svg size={16}><path d="M1 1h14v14H1z" fill="#2e6f8c" stroke="#c0c0a0" /><path d="M2 2h8l1 4-4 1-1 4H2z" fill="#4f9d4f" /><circle cx="3" cy="13" r="2" stroke="#ddd" /><circle cx="7" cy="12" r="2" stroke="#ddd" /></Svg>
          <a href="#" className="ml-[5px] text-white">Electric Utility Network</a>
          <button type="button" aria-label="Close tab" className="ml-[11px]"><X size={13} strokeWidth={1.500} /></button>
        </div>
        <div className="flex flex-1 items-center pt-[2px] pl-[6px]">
          <Svg size={16}><rect x="2.500" y=".5" width="11" height="15" rx="1" stroke="#a9a9a9" /><path d="M4.500 4l1 1 1.500-2M8 4h4M4.500 8h2M8 8h4M4.500 12h2M8 12h4" stroke="#a9a9a9" /></Svg>
          <a href="#" className="ml-[5px] flex-1">Attribute Rules: ElectricLine</a>
          <button type="button" aria-label="Tab list" className="mr-1"><Caret /></button>
        </div>
      </div>
      <div className="ml-[6px] h-[3px] shrink-0 bg-[#1f5f93]" />
      <div className="ml-[6px] flex min-h-0 flex-1 flex-col border-l border-[#5a5a5a]">
        <div className="relative min-h-0 flex-1 overflow-hidden">
          <MapDrawing />
          <Popup />
        </div>
        <StatusBar />
      </div>
      <div className="h-[3px] shrink-0" />
    </main>
  );
}

/* ---------- contents pane ---------- */

function Check({ name, on }: { name: string; on: boolean }) {
  return (
    <label className="flex items-center gap-[5px] whitespace-nowrap">
      <span className="grid">
        <input type="checkbox" defaultChecked={on} className="peer col-start-1 row-start-1 h-[14px] w-[14px] appearance-none rounded-sm border border-[#8f8f8f] bg-[#232323]" />
        <svg viewBox="0 0 14 14" className="pointer-events-none invisible col-start-1 row-start-1 h-[14px] w-[14px] peer-checked:visible" fill="none" aria-hidden="true"><path d="M3 7.500l3 3 5.500-6.500" stroke="#d8d8d8" strokeWidth="1.800" /></svg>
      </span>
      {name}
    </label>
  );
}

function Layer({ name, on = true, open = false }: { name: string; on?: boolean; open?: boolean }) {
  return <div className="flex h-6 items-center gap-[2px] pl-[14px]"><Expander open={open} /><Check name={name} on={on} /></div>;
}

function SubLayer({ name, last = false }: { name: string; last?: boolean }) {
  return (
    <div className="flex h-6 items-center pl-[29px]">
      <div className="flex h-full w-[6px] flex-col">
        <span className="h-3 border-b border-l border-[#777]" />
        <span className={clsx('h-3', !last && 'border-l border-[#777]')} />
      </div>
      <Expander className="mr-[2px] ml-[4px]" />
      <Check name={name} on />
    </div>
  );
}

const topLayers: [string, boolean][] = [['Error Layers', false], ['Validation Point Errors', true], ['Electric Device', true]];
const subLayers = ['Unknown', 'Neutral', 'Ground', 'High Voltage Busbar', 'High Voltage Conductor', 'High Voltage Connector', 'High Voltage Static Wire', 'Medium Voltage Busbar'];
const lowerSubLayers = ['Medium Voltage Connector', 'Low Voltage Busbar', 'Low Voltage Conductor', 'Low Voltage Connector', 'Low Voltage Service'];
const bottomLayers: [string, boolean][] = [
  ['Validation Line Errors', true], ['Validation Polygon Errors', true], ['Network Utility Network', false], ['Electric Assembly', true], ['Electric Junction', true],
  ['Structure Junction', false], ['Structure Line', false], ['Electric SubnetLine', false], ['Structure Boundary', true], ['Service Territory', false],
];
const tables = ['Electric Junction Object', 'Electric Edge Object', 'Structure Junction Object'];

function Symbol({ color, text }: { color: string; text: string }) {
  return <div className="flex h-5 items-center gap-[6px]"><span className={clsx('h-1 w-5 rounded-full', color)} />{text}</div>;
}

function ContentsPane() {
  return (
    <aside className="mb-px flex w-[379px] shrink-0 flex-col border-2 border-r-0 border-[#2f74b0] bg-[#333333] text-[12px] text-[#d8d8d8]">
      <div className="flex h-[30px] shrink-0 items-center justify-between pr-[2px] pb-[2px] pl-[5px]">
        <h2 className="text-[15px] text-[#2f86d6]">Contents</h2>
        <div className="flex items-center gap-[8px] text-[#d0d0d0]">
          <button type="button" aria-label="Pane options"><Caret /></button>
          <button type="button" aria-label="Maximize"><MaxBox /></button>
          <button type="button" aria-label="Close"><X size={13} strokeWidth={1.700} /></button>
        </div>
      </div>
      <div className="flex shrink-0 items-center pl-[3px]">
        <Svg size={16}><path d="M1 1h13L9 8v7H6V8z" fill="#777" stroke="#b5b5b5" /></Svg>
        <label className="ml-[5px] flex h-6 flex-1 items-center gap-[9px] border border-[#8a8a8a] bg-[#232323] px-[5px] text-[11px]">
          <input aria-label="Search layers" placeholder="Search" className="min-w-0 flex-1 bg-transparent italic outline-none placeholder:text-[#b5b5b5]" />
          <Search size={12} strokeWidth={2.500} className="-scale-x-100" aria-hidden="true" />
          <Caret />
        </label>
      </div>
      <div className="mt-[8px] ml-[14px] flex w-[192px] shrink-0 flex-col">
        <div className="flex h-[28px] items-center gap-[11px] pb-px pl-[4px]">
          <button type="button" aria-label="List by drawing order"><Svg size={22}><path d="M1 1h5l1 4H0zM10 7h5l1 4H9zM10 12h5l1 4H9z" fill="#d8c03a" /><path d="M3.500 6v8H9M3.500 9H9" stroke="#b5b5b5" /></Svg></button>
          <button type="button" aria-label="List by data source"><Svg size={22}><path d="M1.500 3.500v9c0 3 13 3 13 0v-9" fill="#444" stroke="#8f8f8f" /><ellipse cx="8" cy="3.500" rx="6.500" ry="2.500" fill="#444" stroke="#8f8f8f" /></Svg></button>
          <button type="button" aria-label="List by selection"><LayerTile size={20} /></button>
          <button type="button" aria-label="List by editing"><Svg size={22}><path d="M1 15l1-3L12.500 1 14.500 3 4 13.800z" fill="#e0c33a" /><path d="M12.500 1l1-1L15.500 2l-1 1z" fill="#c8553a" /><path d="M1 15l1-3 2 1.800z" fill="#d8b98a" /></Svg></button>
          <button type="button" aria-label="List by snapping"><Svg size={22}><path d="M1 1h11v11H1zM6.500 1v11M1 6.500h11" stroke="#8f8f8f" /><path d="M8 11.500h8M12 7.500v8" stroke="#4a9bd6" strokeWidth="1.500" /></Svg></button>
          <button type="button" aria-label="List by labeling"><Svg size={22}><path d="M1 10L9 0.500l6.500 4L9 13.500l-5 2-3-2z" fill="#b0722c" stroke="#d9974a" strokeWidth=".8" /><path d="M6 9l5-6M8.500 10l4-5" stroke="#3a2a18" /><circle cx="4" cy="12" r="1.300" fill="#333" /></Svg></button>
        </div>
        <div className="flex"><span className="h-[3px] w-8 bg-[#3d8bd0]" /><span className="h-[3px] flex-1 bg-[#4d4d4d]" /></div>
      </div>
      <h3 className="mt-[14px] ml-[14px] flex h-[18px] shrink-0 items-center text-[13px] font-semibold">Drawing Order</h3>
      <div className="flex min-h-0 flex-1 overflow-hidden pt-[6px]">
        <div className="min-w-0 flex-1 pr-px">
          <div className="flex h-6 items-center gap-[4px] pl-[2px]">
            <Expander open />
            <Svg size={16}><path d="M1 1h14v14H1z" fill="#1c5f8c" stroke="#b5b5b5" /><path d="M2 2h7l2 3-4 2-1 7H2zM11 10l3-2v4z" fill="#4f9d4f" /></Svg>
            Electric Utility Network
          </div>
          {topLayers.map(([n, on]) => <Layer key={n} name={n} on={on} />)}
          <Layer name="ElectricLine" open />
          {subLayers.map((n) => <SubLayer key={n} name={n} />)}
          <div className="ml-[22px] h-[134px] border border-dashed border-[#a0a0a0]">
            <div className="flex h-full">
              <div className="ml-[6px] w-px bg-[#777]" />
              <div className="flex-1">
                <div className="flex h-[23px] items-center">
                  <span className="h-px w-[4px] bg-[#777]" />
                  <Expander open className="mr-[2px] ml-[2px]" />
                  <div className="flex h-[23px] flex-1 items-center border border-[#3d8bd0] bg-[#2f5275] pl-[2px]"><Check name="Medium Voltage Conductor" on /></div>
                </div>
                <div className="flex h-[22px] items-center pl-[21px] text-[11px] font-semibold">OutrunNumber</div>
                <div className="pl-[22px]">
                  <Symbol color="bg-[#2d7007]" text="50" />
                  <Symbol color="bg-[#0a5ce0]" text="78" />
                  <Symbol color="bg-[#f50000]" text="<Null>" />
                  <div className="pt-[5px]"><Symbol color="bg-[#828282]" text="<all other values>" /></div>
                </div>
              </div>
            </div>
          </div>
          {lowerSubLayers.map((n) => <SubLayer key={n} name={n} last={n === 'Low Voltage Service'} />)}
          {bottomLayers.map(([n, on]) => <Layer key={n} name={n} on={on} />)}
          <div className="flex h-6 items-center gap-[4px] pl-[13px] text-[11px] font-semibold"><Expander open />Standalone Tables</div>
          {tables.map((n) => <div key={n} className="flex h-6 items-center gap-[6px] pl-[24px]"><TableIcon />{n}</div>)}
        </div>
        <Scroller thumb="h-[798px]" className="w-[14px]" />
      </div>
    </aside>
  );
}

/* Highlight boxes and arrows that run across the panes */
function Annotations() {
  return (
    <svg className="pointer-events-none absolute inset-0 h-full w-full" fill="none" aria-hidden="true">
      <g stroke="#fbef14" strokeLinecap="round" strokeLinejoin="round">
        <path d="M384 658L630 495M602 494.500L632 493.500 617 518.500" strokeWidth="5" />
        <path d="M6.500 638.500H378.500V671.500H6.500z" strokeWidth="5" strokeLinejoin="miter" />
      </g>
      <g stroke="#e1252d" strokeWidth="5" strokeLinecap="round" strokeLinejoin="round">
        <path d="M1257 801L658 612M694 608L658 612 682 642" />
        <path d="M1265.500 784.500H1563.500V820.500H1265.500z" strokeLinejoin="miter" />
      </g>
    </svg>
  );
}

export default function App() {
  return (
    <div className="flex h-screen w-full overflow-hidden bg-[#232323] font-['Open_Sans','Noto_Sans',sans-serif] text-[11px] leading-[16px]">
      <div className="relative flex min-w-0 flex-1 flex-col">
        <Ribbon />
        <div className="flex min-h-0 flex-1">
          <AttributesPane />
          <MapView />
        </div>
        <Annotations />
      </div>
      <ContentsPane />
    </div>
  );
}
